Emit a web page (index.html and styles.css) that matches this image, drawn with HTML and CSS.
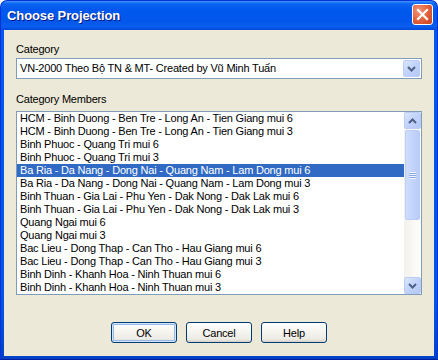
FILE: index.html
```html
<!DOCTYPE html>
<html lang="vi">
<head>
    <meta charset="UTF-8">
    <title>Choose Projection</title>
    <link rel="stylesheet" href="styles.css">
</head>
<body>
<div class="window">
    <div class="titlebar">
        <span class="title">Choose Projection</span>
        <a class="close">
            <svg width="13" height="13" viewBox="0 0 13 13"><path d="M2 2 L11 11 M11 2 L2 11" stroke="#fff" stroke-width="2.2" stroke-linecap="square"/></svg>
        </a>
    </div>
    <div class="client">
        <div class="label">Category</div>
        <div class="combo">
            <span class="combo-text">VN-2000 Theo Bộ TN &amp; MT- Created by Vũ Minh Tuấn</span>
            <span class="arrow-btn combo-btn">
                <svg width="9" height="6" viewBox="0 0 9 6"><path d="M1 1 L4.5 4.5 L8 1" fill="none" stroke="#4d6185" stroke-width="2"/></svg>
            </span>
        </div>
        <div class="label members">Category Members</div>
        <div class="listbox">
            <ul class="items">
                <li>HCM - Binh Duong - Ben Tre - Long An - Tien Giang mui 6</li>
                <li>HCM - Binh Duong - Ben Tre - Long An - Tien Giang mui 3</li>
                <li>Binh Phuoc - Quang Tri mui 6</li>
                <li>Binh Phuoc - Quang Tri mui 3</li>
                <li class="selected">Ba Ria - Da Nang - Dong Nai - Quang Nam - Lam Dong mui 6</li>
                <li>Ba Ria - Da Nang - Dong Nai - Quang Nam - Lam Dong mui 3</li>
                <li>Binh Thuan - Gia Lai - Phu Yen - Dak Nong - Dak Lak mui 6</li>
                <li>Binh Thuan - Gia Lai - Phu Yen - Dak Nong - Dak Lak mui 3</li>
                <li>Quang Ngai mui 6</li>
                <li>Quang Ngai mui 3</li>
                <li>Bac Lieu - Dong Thap - Can Tho - Hau Giang mui 6</li>
                <li>Bac Lieu - Dong Thap - Can Tho - Hau Giang mui 3</li>
                <li>Binh Dinh - Khanh Hoa - Ninh Thuan mui 6</li>
                <li>Binh Dinh - Khanh Hoa - Ninh Thuan mui 3</li>
            </ul>
            <div class="scrollbar">
                <span class="arrow-btn">
                    <svg width="9" height="6" viewBox="0 0 9 6"><path d="M1 5 L4.5 1.5 L8 5" fill="none" stroke="#4d6185" stroke-width="2"/></svg>
                </span>
                <div class="track">
                    <div class="thumb">
                        <span class="grip"></span>
                    </div>
                </div>
                <span class="arrow-btn">
                    <svg width="9" height="6" viewBox="0 0 9 6"><path d="M1 1 L4.5 4.5 L8 1" fill="none" stroke="#4d6185" stroke-width="2"/></svg>
                </span>
            </div>
        </div>
        <div class="buttons">
            <a class="btn default">OK</a>
            <a class="btn">Cancel</a>
            <a class="btn">Help</a>
        </div>
    </div>
</div>
</body>
</html>
```

FILE: styles.css
```css
body {
    margin: 0;
    background: #fff;
    font: 11px "Liberation Sans", Arial, sans-serif;
    letter-spacing: -0.2px;
}

.window {
    width: 438px;
    height: 360px;
    box-sizing: border-box;
    border-radius: 7px 7px 0 0;
    background: linear-gradient(to bottom, #0058ee 0%, #0055e5 85%, #0042c4 100%);
    border: 1px solid #0831d9;
    border-bottom-color: #001ea0;
    display: flex;
    flex-direction: column;
    overflow: hidden;
}

.titlebar {
    height: 29px;
    flex: none;
    display: flex;
    align-items: center;
    justify-content: space-between;
    padding: 0 4px 0 6px;
    background: linear-gradient(to bottom, #3d95ff 0%, #0a64f0 10%, #0058ee 30%, #0257ea 70%, #0a5fef 88%, #0046d8 100%);
    border-radius: 6px 6px 0 0;
}

.title {
    color: #fff;
    font: bold 13px "Liberation Sans", Arial, sans-serif;
    letter-spacing: -0.1px;
    text-shadow: 1px 1px #0a1883;
    margin-top: -1px;
}

.close {
    width: 19px;
    height: 19px;
    display: flex;
    align-items: center;
    justify-content: center;
    border: 1px solid #fff;
    border-radius: 3px;
    background: radial-gradient(circle at 30% 30%, #f0947a 0%, #e4673f 45%, #c8401e 100%);
    margin-top: -2px;
}

.client {
    flex: 1;
    margin: 0 3px 3px;
    background: #ece9d8;
    padding: 13px 12px 13px;
    display: flex;
    flex-direction: column;
}

.label {
    line-height: 13px;
    height: 13px;
    color: #000;
}

.members {
    margin-top: 14px;
}

.combo {
    margin-top: 2px;
    height: 21px;
    box-sizing: border-box;
    border: 1px solid #7f9db9;
    background: #fff;
    display: flex;
    align-items: center;
    justify-content: space-between;
    padding: 0 1px 0 3px;
}

.combo-text {
    line-height: 13px;
}

.arrow-btn {
    width: 15px;
    height: 15px;
    flex: none;
    display: flex;
    align-items: center;
    justify-content: center;
    border: 1px solid #bbcdf7;
    border-radius: 2px;
    background: linear-gradient(135deg, #dae6fe 0%, #c1d3fb 50%, #b4c8f6 100%);
}

.listbox {
    margin-top: 5px;
    height: 184px;
    box-sizing: border-box;
    border: 1px solid #7f9db9;
    background: #fff;
    display: flex;
}

.items {
    flex: 1;
    margin: 0;
    padding: 0;
    list-style: none;
}

.items li {
    height: 13px;
    line-height: 13px;
    padding-left: 3px;
    white-space: nowrap;
}

.items .selected {
    background: #316ac5;
    color: #fff;
}

.scrollbar {
    width: 17px;
    display: flex;
    flex-direction: column;
    background: linear-gradient(to right, #f3f1ec, #fefefb);
}

.track {
    flex: 1;
    padding: 1px 0;
}

.thumb {
    height: 90px;
    margin: 0 1px;
    box-sizing: border-box;
    border: 1px solid #bbcdf7;
    border-radius: 2px;
    background: linear-gradient(to right, #cfdcfd 0%, #c3d4fc 50%, #b9ccf8 100%);
    display: flex;
    align-items: center;
    justify-content: center;
}

.grip {
    width: 7px;
    height: 7px;
    background: repeating-linear-gradient(to bottom, #eef3fe 0 1px, #8caae6 1px 2px);
}

.buttons {
    margin-top: 27px;
    display: flex;
    justify-content: center;
    gap: 9px;
}

.btn {
    width: 66px;
    height: 21px;
    box-sizing: border-box;
    border: 1px solid #003c74;
    border-radius: 3px;
    background: linear-gradient(to bottom, #ffffff 0%, #f4f3ee 50%, #ecebe5 85%, #d6d0c5 100%);
    display: flex;
    align-items: center;
    justify-content: center;
    color: #000;
}

.btn.default {
    box-shadow: inset 0 0 0 1px #cee7ff, inset 0 0 0 2px #98b8ea;
}
```
